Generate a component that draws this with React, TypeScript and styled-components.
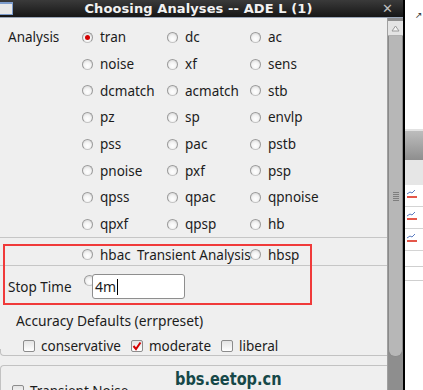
import React from 'react';
import styled, { createGlobalStyle } from 'styled-components';

// --- Global ---
const GlobalStyle = createGlobalStyle`
  html, body {
    margin: 0;
    padding: 0;
    width: 423px;
    height: 390px;
    overflow: hidden;
    background: #ffffff;
  }
  body {
    font-family: 'Noto Sans', 'DejaVu Sans', sans-serif;
    font-size: 13.5px;
    color: #1c1c1c;
  }
`;

// --- Frame ---
const Screen = styled.div`
  display: flex;
  width: 423px;
  height: 390px;
  overflow: hidden;
`;

const Dialog = styled.div`
  width: 403px;
  display: flex;
  flex-direction: column;
  flex-shrink: 0;
`;

const TitleBar = styled.div`
  height: 17px;
  flex-shrink: 0;
  background: linear-gradient(#3a3a3a, #161616);
  border-bottom: 1px solid #9aa6b8;
  display: flex;
  align-items: center;
  position: relative;
  color: #f2f2f2;
`;

const WinIcon = styled.div`
  position: absolute;
  left: -3px;
  top: 2px;
  width: 14px;
  height: 10px;
  border: 1px solid #7d9ccc;
  border-top-width: 2px;
  background: #e8e8e8;
`;

const TitleText = styled.div`
  flex: 1;
  text-align: center;
  font-family: 'DejaVu Sans', sans-serif;
  font-weight: bold;
  font-size: 13px;
  letter-spacing: 0.1px;
  padding-right: 6px;
`;

const CloseX = styled.div`
  position: absolute;
  right: 10px;
  top: 1px;
  font-family: 'DejaVu Sans', sans-serif;
  font-weight: bold;
  font-size: 13px;
  color: #bdbdbd;
`;

const Body = styled.div`
  flex: 1;
  display: flex;
  background: #efefef;
  min-height: 0;
`;

const Content = styled.div`
  width: 387px;
  position: relative;
  display: flex;
  flex-direction: column;
  padding-top: 6px;
  overflow: hidden;
  & > * {
    flex-shrink: 0;
  }
`;

// --- Analysis grid ---
const AnalysisGrid = styled.div`
  display: grid;
  grid-template-columns: 74px 85px 83px 83px;
  grid-auto-rows: 26.7px;
  padding-left: 8px;
  border-bottom: 1px solid #c6c6c6;
  height: 213px;
`;

const GroupLabel = styled.div`
  display: flex;
  align-items: center;
  grid-row: 1;
  grid-column: 1;
`;

const Choice = styled.label<{ $col: number }>`
  display: flex;
  align-items: center;
  gap: 7px;
  grid-column: ${(p) => p.$col + 2};
  white-space: nowrap;
`;

const Radio = styled.span<{ $on?: boolean }>`
  width: 9px;
  height: 9px;
  border-radius: 50%;
  flex-shrink: 0;
  border: 1px solid #9a9a9a;
  border-bottom-color: #c4c4c4;
  background: radial-gradient(circle at 50% 65%, #ffffff 0%, #f4f4f4 45%, #cfcfcf 100%);
  position: relative;
  &::after {
    content: '';
    display: ${(p) => (p.$on ? 'block' : 'none')};
    position: absolute;
    left: 2px;
    top: 2px;
    width: 5px;
    height: 5px;
    border-radius: 50%;
    background: #d40000;
  }
`;

// --- Transient band ---
const Band = styled.div`
  display: grid;
  grid-template-columns: 85px 83px 83px;
  align-items: center;
  padding: 6px 0 0 82px;
  box-sizing: border-box;
  height: 28px;
  border-bottom: 1px solid #c6c6c6;
  position: relative;
`;

const BandItem = styled.div<{ $col: number }>`
  grid-column: ${(p) => p.$col};
  display: flex;
  align-items: center;
  gap: 7px;
`;

const Clipped = styled.span`
  width: 32px;
  overflow: hidden;
  white-space: nowrap;
`;

const BandTitle = styled.span`
  position: absolute;
  left: 137px;
  top: 6px;
  line-height: 22px;
  z-index: 1;
`;

const StopRow = styled.div`
  height: 27px;
  display: flex;
  align-items: center;
  padding-left: 8px;
  margin-top: 7px;
`;

const StopLabel = styled.span`
  width: 76px;
`;

const PeekRadio = styled(Radio)`
  align-self: flex-start;
  margin-top: 2px;
`;

const Entry = styled.div`
  margin-left: -3px;
  width: 89px;
  height: 23px;
  border: 1px solid #8e8e8e;
  border-radius: 3px;
  background: #ffffff;
  display: flex;
  align-items: center;
  padding-left: 2px;
  position: relative;
  z-index: 1;
  font-size: 14px;
`;

const Caret = styled.span`
  width: 1px;
  height: 16px;
  background: #000;
  margin-left: 1px;
`;

const AccuracyLabel = styled.div`
  padding-left: 16px;
  margin-top: 11px;
  height: 18px;
  display: flex;
  align-items: center;
  font-size: 13.8px;
`;

const CheckRow = styled.div`
  display: flex;
  align-items: center;
  padding-left: 23px;
  height: 18px;
  margin-top: 8px;
  gap: 6px;
`;

const Check = styled.span<{ $on?: boolean }>`
  width: 10px;
  height: 10px;
  flex-shrink: 0;
  border: 1px solid #8c8c8c;
  border-radius: 2px;
  background: linear-gradient(#e4e4e4, #ffffff);
  position: relative;
  display: flex;
  align-items: center;
  justify-content: center;
`;

const CheckText = styled.span`
  margin-right: 4px;
`;

const GroupEnd = styled.div`
  height: 6px;
  margin-top: -6px;
  border-bottom: 1px solid #c2c2c2;
  border-left: 1px solid #c2c2c2;
  border-bottom-left-radius: 4px;
`;

const NextGroup = styled.div`
  margin-top: 9px;
  border-top: 1px solid #c2c2c2;
  border-left: 1px solid #c2c2c2;
  border-top-left-radius: 4px;
  padding: 16px 0 0 11px;
  display: flex;
  align-items: center;
  gap: 6px;
`;

const Redbox = styled.div`
  position: absolute;
  left: 3px;
  top: 226px;
  width: 305px;
  height: 57px;
  border: 2.5px solid #f03a3a;
  pointer-events: none;
`;

const Watermark = styled.div`
  position: absolute;
  left: 175px;
  top: 351px;
  font-family: 'Liberation Sans Narrow', 'DejaVu Sans Condensed', sans-serif;
  font-weight: bold;
  font-size: 17px;
  color: #164848;
  transform: scaleX(0.95);
  transform-origin: left;
`;

// --- Scrollbar ---
const Scroll = styled.div`
  width: 15px;
  background: #8e8e8e;
  border-left: 1px solid #a0a0a0;
  display: flex;
  flex-direction: column;
  padding-top: 3px;
`;

const ScrollBtn = styled.div`
  height: 14px;
  background: #e4e4e4;
  display: flex;
  justify-content: center;
  align-items: center;
  border-bottom: 1px solid #b0b0b0;
`;

const Thumb = styled.div`
  height: 320px;
  background: #b7b7b7;
  border: 1px solid #8a8a8a;
  border-top: none;
  border-radius: 0 0 7px 7px;
  display: flex;
  justify-content: center;
  align-items: center;
`;

const Grip = styled.div`
  width: 6px;
  height: 9px;
  background: repeating-linear-gradient(#7e7e7e 0 1px, transparent 1px 2px);
`;

// --- Right side window ---
const Side = styled.div`
  flex: 1;
  border-left: 2px solid #000;
  background: #ffffff;
  display: flex;
  flex-direction: column;
`;

const SideMark = styled.div`
  height: 131px;
  font-size: 9px;
  color: #333;
  padding: 8px 0 0 10px;
  box-sizing: border-box;
  border-bottom: 2px solid #e2e2e2;
`;

const SideHeader = styled.div`
  height: 29px;
  background: linear-gradient(#bdbdbd, #8e8e8e);
`;

const SideSub = styled.div`
  height: 25px;
  background: #e6e6e6;
`;

const SideRow = styled.div`
  height: 22px;
  border-bottom: 1px solid #d4d4d4;
  display: flex;
  align-items: flex-start;
  padding: 3px 0 0 1px;
  box-sizing: border-box;
`;

const SideLine = styled.div<{ $h: number }>`
  height: ${(p) => p.$h}px;
  border-bottom: 1px solid #cfcfcf;
`;

const WaveIcon = () => (
  <svg width="12" height="12" viewBox="0 0 12 12">
    <path d="M1 6 L4 4 L6 5 L9 2" stroke="#5a7bc0" strokeWidth="1" fill="none" />
    <rect x="1" y="8" width="10" height="2" fill="#e4574a" />
  </svg>
);

const rows: string[][] = [
  ['tran', 'dc', 'ac'],
  ['noise', 'xf', 'sens'],
  ['dcmatch', 'acmatch', 'stb'],
  ['pz', 'sp', 'envlp'],
  ['pss', 'pac', 'pstb'],
  ['pnoise', 'pxf', 'psp'],
  ['qpss', 'qpac', 'qpnoise'],
  ['qpxf', 'qpsp', 'hb'],
];

const App = () => (
  <>
    <GlobalStyle />
    <Screen>
      <Dialog>
        <TitleBar>
          <WinIcon />
          <TitleText>Choosing Analyses -- ADE L (1)</TitleText>
          <CloseX>✕</CloseX>
        </TitleBar>
        <Body>
          <Content>
            <AnalysisGrid>
              <GroupLabel>Analysis</GroupLabel>
              {rows.map((r, ri) =>
                r.map((name, ci) => (
                  <Choice key={name} $col={ci} style={{ gridRow: ri + 1 }}>
                    <Radio $on={name === 'tran'} />
                    {name}
                  </Choice>
                ))
              )}
            </AnalysisGrid>

            <Band>
              <BandItem $col={1}>
                <Radio />
                <Clipped>hbac</Clipped>
              </BandItem>
              <BandItem $col={3}>
                <Radio />
                hbsp
              </BandItem>
              <BandTitle>Transient Analysis</BandTitle>
            </Band>

            <StopRow>
              <StopLabel>Stop Time</StopLabel>
              <PeekRadio />
              <Entry>
                4m
                <Caret />
              </Entry>
            </StopRow>

            <AccuracyLabel>Accuracy Defaults (errpreset)</AccuracyLabel>
            <CheckRow>
              <Check />
              <CheckText>conservative</CheckText>
              <Check $on>
                <svg width="10" height="10" viewBox="0 0 10 10">
                  <path d="M1.5 5 L4 8 L8.5 1.5" stroke="#d40000" strokeWidth="2" fill="none" />
                </svg>
              </Check>
              <CheckText>moderate</CheckText>
              <Check />
              <CheckText>liberal</CheckText>
            </CheckRow>
            <GroupEnd />
            <NextGroup>
              <Check />
              <span>Transient Noise</span>
            </NextGroup>

            <Redbox />
            <Watermark>bbs.eetop.cn</Watermark>
          </Content>
          <Scroll>
            <ScrollBtn>
              <svg width="9" height="7" viewBox="0 0 9 7">
                <path d="M4.5 1 L8 6 L1 6 Z" stroke="#9a9a9a" fill="#f4f4f4" />
              </svg>
            </ScrollBtn>
            <Thumb>
              <Grip />
            </Thumb>
          </Scroll>
        </Body>
      </Dialog>
      <Side>
        <SideMark>↗</SideMark>
        <SideHeader />
        <SideSub />
        <SideRow>
          <WaveIcon />
        </SideRow>
        <SideRow>
          <WaveIcon />
        </SideRow>
        <SideRow>
          <WaveIcon />
        </SideRow>
        <SideLine $h={15} />
        <SideLine $h={13} />
      </Side>
    </Screen>
  </>
);

export default App;
